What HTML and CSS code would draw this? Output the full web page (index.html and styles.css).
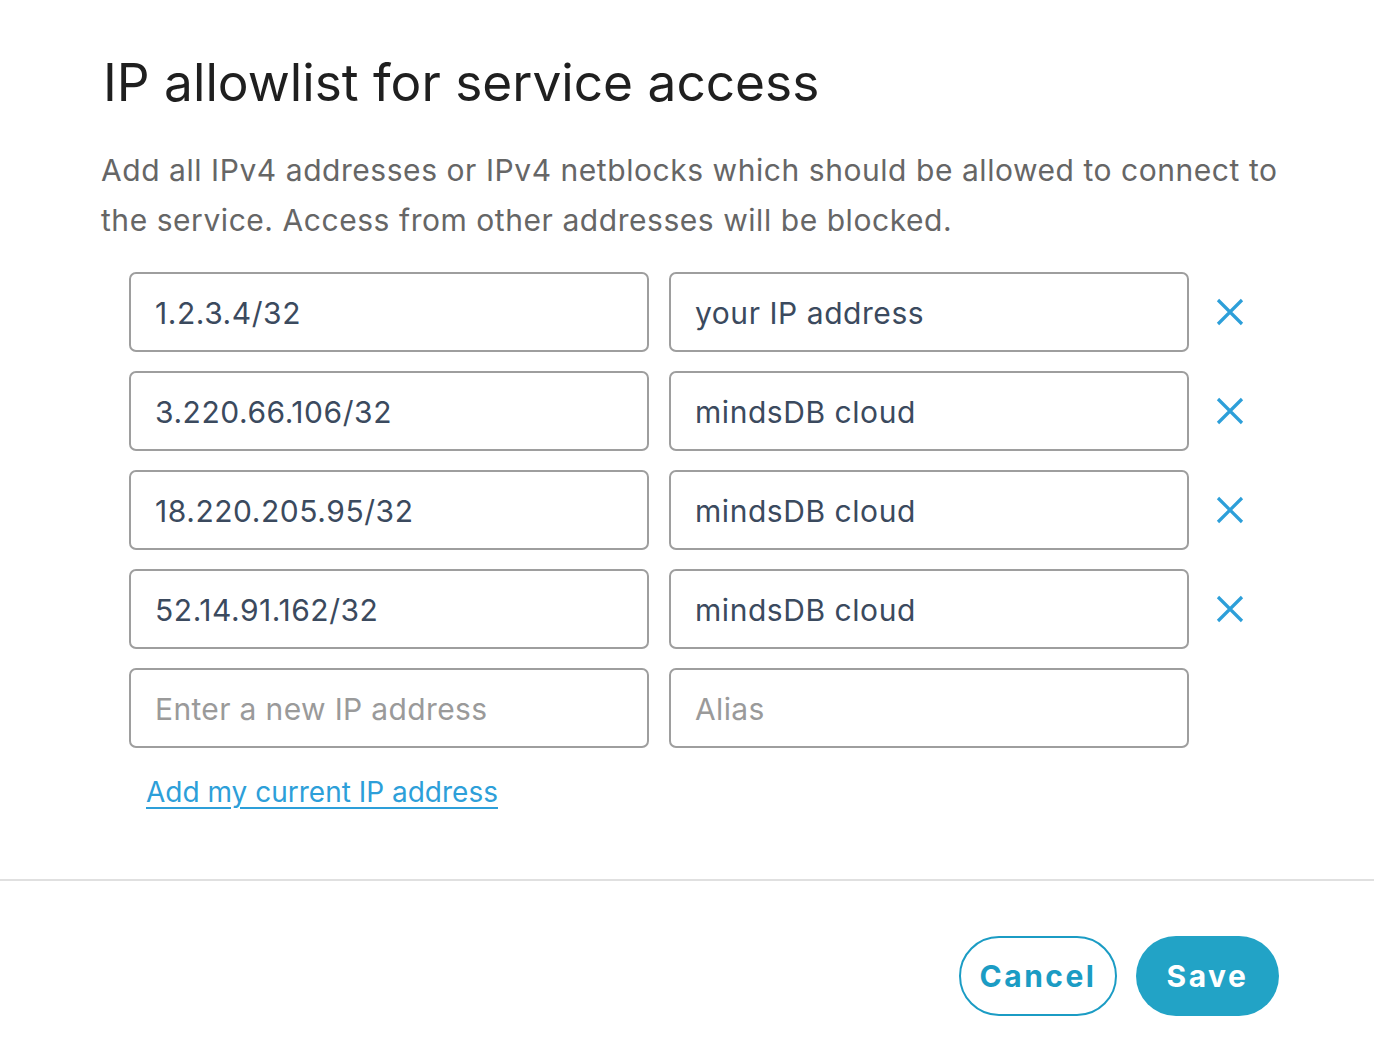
FILE: index.html
```html
<!DOCTYPE html>
<html lang="en">
<head>
<meta charset="utf-8">
<title>IP allowlist for service access</title>
<link rel="stylesheet" href="styles.css">
</head>
<body>
<div class="dialog">
  <div class="content">
    <h1 class="title">IP allowlist for service access</h1>
    <p class="desc">Add all IPv4 addresses or IPv4 netblocks which should be allowed to connect to the service. Access from other addresses will be blocked.</p>
    <div class="list">
      <div class="row">
        <div class="field">1.2.3.4/32</div>
        <div class="field">your IP address</div>
        <button class="remove" aria-label="Remove"><svg viewBox="0 0 28 28" width="28" height="28"><path d="M2 2 L26 26 M26 2 L2 26" stroke="#2d9fd9" stroke-width="3.2" fill="none"/></svg></button>
      </div>
      <div class="row">
        <div class="field">3.220.66.106/32</div>
        <div class="field">mindsDB cloud</div>
        <button class="remove" aria-label="Remove"><svg viewBox="0 0 28 28" width="28" height="28"><path d="M2 2 L26 26 M26 2 L2 26" stroke="#2d9fd9" stroke-width="3.2" fill="none"/></svg></button>
      </div>
      <div class="row">
        <div class="field">18.220.205.95/32</div>
        <div class="field">mindsDB cloud</div>
        <button class="remove" aria-label="Remove"><svg viewBox="0 0 28 28" width="28" height="28"><path d="M2 2 L26 26 M26 2 L2 26" stroke="#2d9fd9" stroke-width="3.2" fill="none"/></svg></button>
      </div>
      <div class="row">
        <div class="field">52.14.91.162/32</div>
        <div class="field">mindsDB cloud</div>
        <button class="remove" aria-label="Remove"><svg viewBox="0 0 28 28" width="28" height="28"><path d="M2 2 L26 26 M26 2 L2 26" stroke="#2d9fd9" stroke-width="3.2" fill="none"/></svg></button>
      </div>
      <div class="row">
        <div class="field placeholder">Enter a new IP address</div>
        <div class="field placeholder">Alias</div>
      </div>
      <a class="add-link" href="#">Add my current IP address</a>
    </div>
  </div>
  <div class="footer">
    <button class="btn btn-cancel">Cancel</button>
    <button class="btn btn-save">Save</button>
  </div>
</div>
</body>
</html>
```
FILE: styles.css
```css
* { box-sizing: border-box; }
html, body { margin: 0; padding: 0; background: #fff; }
body {
  font-family: "Inter", "Noto Sans", sans-serif;
  width: 1374px;
  height: 1064px;
  overflow: hidden;
}
.dialog { display: flex; flex-direction: column; }
.content { padding: 46px 90px 0 101px; }
.title {
  margin: 0;
  font-size: 51.4px;
  font-weight: 400;
  color: #1f1f1f;
  line-height: 72px;
  letter-spacing: 0;
  padding-left: 2px;
}
.desc {
  margin: 27px 0 0;
  font-size: 30px;
  line-height: 50px;
  color: #666;
  letter-spacing: 0.55px;
}
.list {
  margin-top: 27px;
  padding-left: 28px;
  display: flex;
  flex-direction: column;
  gap: 19px;
}
.row {
  display: grid;
  grid-template-columns: 520px 520px 80px;
  column-gap: 20px;
  align-items: center;
}
.field {
  height: 80px;
  border: 2px solid #9e9e9e;
  border-radius: 7px;
  padding: 2px 24px 0;
  display: flex;
  align-items: center;
  font-size: 30px;
  color: #3b4a5e;
  letter-spacing: 0.55px;
}
.field.placeholder { color: #9a9a9a; letter-spacing: 0.35px; }
.remove {
  border: 0;
  background: none;
  padding: 0;
  width: 42px;
  height: 42px;
  margin-left: 0;
  display: flex;
  align-items: center;
  justify-content: center;
}
.add-link {
  margin-top: 8px;
  margin-left: 17px;
  align-self: flex-start;
  font-size: 28px;
  color: #2d9fd9;
  text-decoration: underline;
  text-underline-offset: 5px;
  letter-spacing: 0;
}
.footer {
  margin-top: 70px;
  border-top: 2px solid #e0e0e0;
  display: flex;
  justify-content: flex-end;
  gap: 19px;
  padding: 55px 95px 0 0;
}
.btn {
  height: 80px;
  border-radius: 40px;
  font-family: "Inter", "Noto Sans", sans-serif;
  font-weight: 700;
  font-size: 30px;
  letter-spacing: 2.5px;
  padding: 0;
}
.btn-cancel {
  width: 158px;
  background: #fff;
  border: 2px solid #1b9cc4;
  color: #1b9cc4;
}
.btn-save {
  width: 143px;
  background: #22a3c6;
  border: 0;
  color: #fff;
}
```
